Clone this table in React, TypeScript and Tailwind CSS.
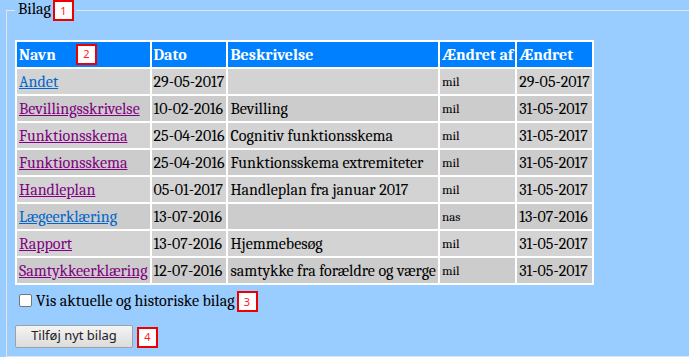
import React from 'react';

type Row = {
  navn: string;
  visited: boolean;
  dato: string;
  beskrivelse: string;
  af: string;
  aendret: string;
};

const rows: Row[] = [
  { navn: 'Andet', visited: false, dato: '29-05-2017', beskrivelse: '', af: 'mil', aendret: '29-05-2017' },
  { navn: 'Bevillingsskrivelse', visited: true, dato: '10-02-2016', beskrivelse: 'Bevilling', af: 'mil', aendret: '31-05-2017' },
  { navn: 'Funktionsskema', visited: true, dato: '25-04-2016', beskrivelse: 'Cognitiv funktionsskema', af: 'mil', aendret: '31-05-2017' },
  { navn: 'Funktionsskema', visited: true, dato: '25-04-2016', beskrivelse: 'Funktionsskema extremiteter', af: 'mil', aendret: '31-05-2017' },
  { navn: 'Handleplan', visited: true, dato: '05-01-2017', beskrivelse: 'Handleplan fra januar 2017', af: 'mil', aendret: '31-05-2017' },
  { navn: 'Lægeerklæring', visited: false, dato: '13-07-2016', beskrivelse: '', af: 'nas', aendret: '13-07-2016' },
  { navn: 'Rapport', visited: true, dato: '13-07-2016', beskrivelse: 'Hjemmebesøg', af: 'mil', aendret: '31-05-2017' },
  { navn: 'Samtykkeerklæring', visited: true, dato: '12-07-2016', beskrivelse: 'samtykke fra forældre og værge', af: 'mil', aendret: '31-05-2017' },
];

function Marker({ n }: { n: number }) {
  return (
    <span className="inline-flex items-center justify-center w-[21px] h-[21px] border-2 border-[#ee0000] bg-white text-[#ff2020] text-[11px] font-sans font-normal align-middle">
      {n}
    </span>
  );
}

export default function App() {
  return (
    <div className="w-[689px] h-[357px] overflow-hidden bg-[#99ccff] font-serif text-[16px] text-black">
      <fieldset className="ml-[6px] w-[720px] h-[357px] border border-[#e4e4e4] pl-[8px]">
        <legend className="pl-[3px] pr-[2px] leading-[18px]">
          Bilag<span className="ml-[2px]"><Marker n={1} /></span>
        </legend>

        <table className="mt-[19px] w-[570px] border-separate border-spacing-[2px] bg-white">
          <thead>
            <tr className="bg-[#0080ff] text-white">
              <th className="w-[121px] h-[25px] px-[2px] text-left font-bold whitespace-nowrap">
                <span className="inline-flex items-center gap-[20px]">
                  Navn <Marker n={2} />
                </span>
              </th>
              <th className="w-[82px] px-[2px] text-left font-bold">Dato</th>
              <th className="w-[200px] px-[2px] text-left font-bold">Beskrivelse</th>
              <th className="w-[74px] px-[2px] text-left font-bold whitespace-nowrap">Ændret af</th>
              <th className="w-[81px] px-[2px] text-left font-bold">Ændret</th>
            </tr>
          </thead>
          <tbody>
            {rows.map((r, i) => (
              <tr key={i} className={i % 2 === 0 ? 'bg-[#d3d3d3]' : 'bg-[#cccccc]'}>
                <td className="h-[25px] px-[2px] whitespace-nowrap">
                  <a
                    href="#"
                    className={`underline ${r.visited ? 'text-[#800080]' : 'text-[#0066cc]'}`}
                  >
                    {r.navn}
                  </a>
                </td>
                <td className="px-[2px] whitespace-nowrap">{r.dato}</td>
                <td className="px-[2px] whitespace-nowrap">{r.beskrivelse}</td>
                <td className="px-[2px] text-[13px] whitespace-nowrap">{r.af}</td>
                <td className="px-[2px] whitespace-nowrap">{r.aendret}</td>
              </tr>
            ))}
          </tbody>
        </table>

        <div className="mt-[5px] flex items-center h-[21px]">
          <span className="ml-[4px] w-[13px] h-[13px] border border-[#767676] bg-white rounded-[2px]" />
          <span className="ml-[4px]">Vis aktuelle og historiske bilag</span>
          <span className="ml-[2px]"><Marker n={3} /></span>
        </div>

        <div className="mt-[13px] flex items-center">
          <button className="w-[118px] h-[23px] border border-[#a0a0a0] rounded-[2px] bg-gradient-to-b from-[#f4f4f4] to-[#dcdcdc] text-[13px] text-[#222] font-sans">
            Tilføj nyt bilag
          </button>
          <span className="ml-[4px]"><Marker n={4} /></span>
        </div>
      </fieldset>
    </div>
  );
}
